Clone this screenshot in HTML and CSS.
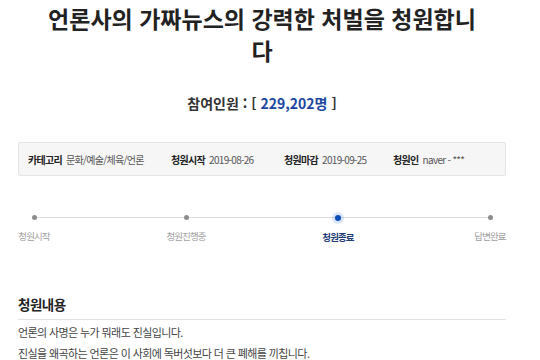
FILE: index.html
```html
<!DOCTYPE html>
<html lang="ko">
<head>
<meta charset="UTF-8">
<meta name="viewport" content="width=device-width, initial-scale=1.0">
<title>청원</title>
<link rel="stylesheet" href="styles.css">
</head>
<body>

<div class="container">
    <h1 class="title">언론사의 가짜뉴스의 강력한 처벌을 청원합니다</h1>

    <p class="count">참여인원 : [ <span class="count-num">229,202명</span> ]</p>

    <div class="info-box">
        <div class="info-item"><span class="info-label">카테고리</span> 문화/예술/체육/언론</div>
        <div class="info-item"><span class="info-label">청원시작</span> 2019-08-26</div>
        <div class="info-item"><span class="info-label">청원마감</span> 2019-09-25</div>
        <div class="info-item"><span class="info-label">청원인</span> naver - ***</div>
    </div>

    <div class="steps">
        <div class="step"><span class="dot"></span><span class="step-name">청원시작</span></div>
        <div class="step"><span class="dot"></span><span class="step-name">청원진행중</span></div>
        <div class="step active"><span class="dot"></span><span class="step-name">청원종료</span></div>
        <div class="step"><span class="dot"></span><span class="step-name">답변완료</span></div>
    </div>

    <h2 class="section-title">청원내용</h2>
    <div class="content">
        <p>언론의 사명은 누가 뭐래도 진실입니다.</p>
        <p>진실을 왜곡하는 언론은 이 사회에 독버섯보다 더 큰 폐해를 끼칩니다.</p>
    </div>
</div>

</body>
</html>
```

FILE: styles.css
```css
body {
    font-family: "Noto Sans CJK KR", "Noto Sans", sans-serif;
    background-color: #fff;
    color: #333;
    margin: 0;
}

.container {
    width: 488px;
    margin-left: 18px;
}

.title {
    margin: 0;
    padding: 2px 25px 0;
    font-size: 23px;
    line-height: 32px;
    font-weight: bold;
    color: #222;
    text-align: center;
}

.count {
    margin: 27px 0 0;
    font-size: 14px;
    line-height: 20px;
    font-weight: bold;
    text-align: center;
    color: #333;
}

.count-num {
    color: #1b46a0;
}

.info-box {
    display: grid;
    grid-template-columns: 143px 113px 109px auto;
    align-items: center;
    margin-top: 29px;
    height: 32px;
    padding: 0 9px;
    background-color: #f6f6f6;
    border: 1px solid #e4e4e4;
    border-radius: 2px;
    font-size: 10px;
    letter-spacing: -0.7px;
    color: #555;
}

.info-label {
    font-weight: bold;
    color: #222;
    margin-right: 2px;
}

.steps {
    position: relative;
    display: flex;
    justify-content: space-between;
    margin-top: 37px;
}

.steps::before {
    content: "";
    position: absolute;
    top: 4px;
    left: 16px;
    right: 16px;
    height: 1px;
    background-color: #ddd;
}

.step {
    display: flex;
    flex-direction: column;
    align-items: center;
    position: relative;
    width: 32px;
}

.dot {
    width: 5px;
    height: 5px;
    margin-top: 2px;
    border-radius: 50%;
    background-color: #8c8c8c;
}

.step.active .dot {
    width: 6px;
    height: 6px;
    margin-top: 2px;
    background-color: #0b4db8;
    box-shadow: 0 0 0 3px rgba(80, 140, 230, 0.2);
}

.step-name {
    margin-top: 9px;
    font-size: 9.5px;
    line-height: 14px;
    letter-spacing: -0.9px;
    white-space: nowrap;
    color: #a0a0a0;
}

.step.active .step-name {
    font-weight: bold;
    color: #1d3c78;
}

.section-title {
    margin: 50px 0 0;
    padding-bottom: 5px;
    font-size: 13.5px;
    line-height: 20px;
    font-weight: bold;
    letter-spacing: -0.5px;
    color: #222;
    border-bottom: 1px solid #e2e2e2;
}

.content {
    padding-top: 2px;
    font-size: 11px;
    line-height: 21px;
    color: #444;
    letter-spacing: -0.6px;
}

.content p {
    margin: 0;
}
```
